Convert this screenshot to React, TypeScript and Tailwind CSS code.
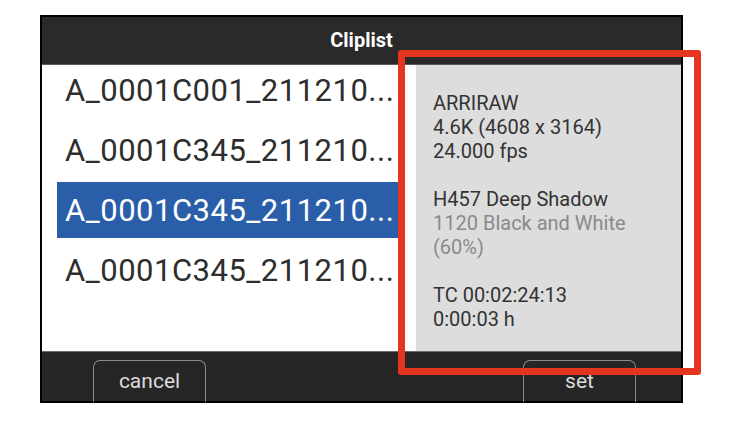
const CLIPS = [
  { name: 'A_0001C001_211210...', selected: false },
  { name: 'A_0001C345_211210...', selected: false },
  { name: 'A_0001C345_211210...', selected: true },
  { name: 'A_0001C345_211210...', selected: false },
]

const INFO: { text: string; dim?: boolean }[][] = [
  [{ text: 'ARRIRAW' }, { text: '4.6K (4608 x 3164)' }, { text: '24.000 fps' }],
  [{ text: 'H457 Deep Shadow' }, { text: '1120 Black and White', dim: true }, { text: '(60%)', dim: true }],
  [{ text: 'TC 00:02:24:13' }, { text: '0:00:03 h' }],
]

function FooterButton({ label }: { label: string }) {
  return (
    <div className="w-[113px] h-[42px] mt-[8px] rounded-t-[7px] border-[1.5px] border-b-0 border-[#8a8a8a] flex items-center justify-center pb-[1px]">
      <span className="text-[21px] text-[#dcdcdc] leading-none">{label}</span>
    </div>
  )
}

export default function App() {
  return (
    <div className="w-[740px] h-[425px] bg-white pt-[15px] pl-[40px]" style={{ fontFamily: 'Roboto, "Liberation Sans", sans-serif' }}>
      <div className="relative w-[643px] h-[388px] border-2 border-black flex flex-col bg-white">
        {/* Header */}
        <div className="h-[48px] shrink-0 bg-[#2a2a2a] border-b border-[#5a5a5a] flex items-center justify-center">
          <span className="text-[20px] font-bold text-white pb-[2px]">Cliplist</span>
        </div>

        {/* Body */}
        <div className="flex-1 flex min-h-0">
          <div className="w-[374px] shrink-0 pl-[15px] pr-[16px]">
            <div className="-mt-[3px] flex flex-col gap-[4px]">
              {CLIPS.map((c, i) => (
                <div
                  key={i}
                  className={
                    c.selected
                      ? 'h-[56px] flex items-center pl-[8px] bg-[#2a5ea8] text-white'
                      : 'h-[56px] flex items-center pl-[8px] text-[#2e2e2e]'
                  }
                >
                  <span className="text-[31px] leading-none whitespace-nowrap tracking-[0.5px]">{c.name}</span>
                </div>
              ))}
            </div>
          </div>
          <div className="flex-1 bg-[#dddddd] pl-[17px] pt-[26px] flex flex-col gap-[24px]">
            {INFO.map((group, gi) => (
              <div key={gi} className="flex flex-col">
                {group.map((l, li) => (
                  <span
                    key={li}
                    className={l.dim ? 'text-[20px] leading-[24px] text-[#8a8a8a]' : 'text-[20px] leading-[24px] text-[#333333]'}
                  >
                    {l.text}
                  </span>
                ))}
              </div>
            ))}
          </div>
        </div>

        {/* Footer */}
        <div className="h-[50px] shrink-0 bg-[#262626] border-t border-[#6a6a6a] flex justify-between pl-[51px] pr-[45px]">
          <FooterButton label="cancel" />
          <FooterButton label="set" />
        </div>

        {/* Annotation */}
        <div className="absolute left-[356px] top-[33px] w-[303px] h-[325px] border-[7px] border-[#e5341f] rounded-[3px]" />
      </div>
    </div>
  )
}
